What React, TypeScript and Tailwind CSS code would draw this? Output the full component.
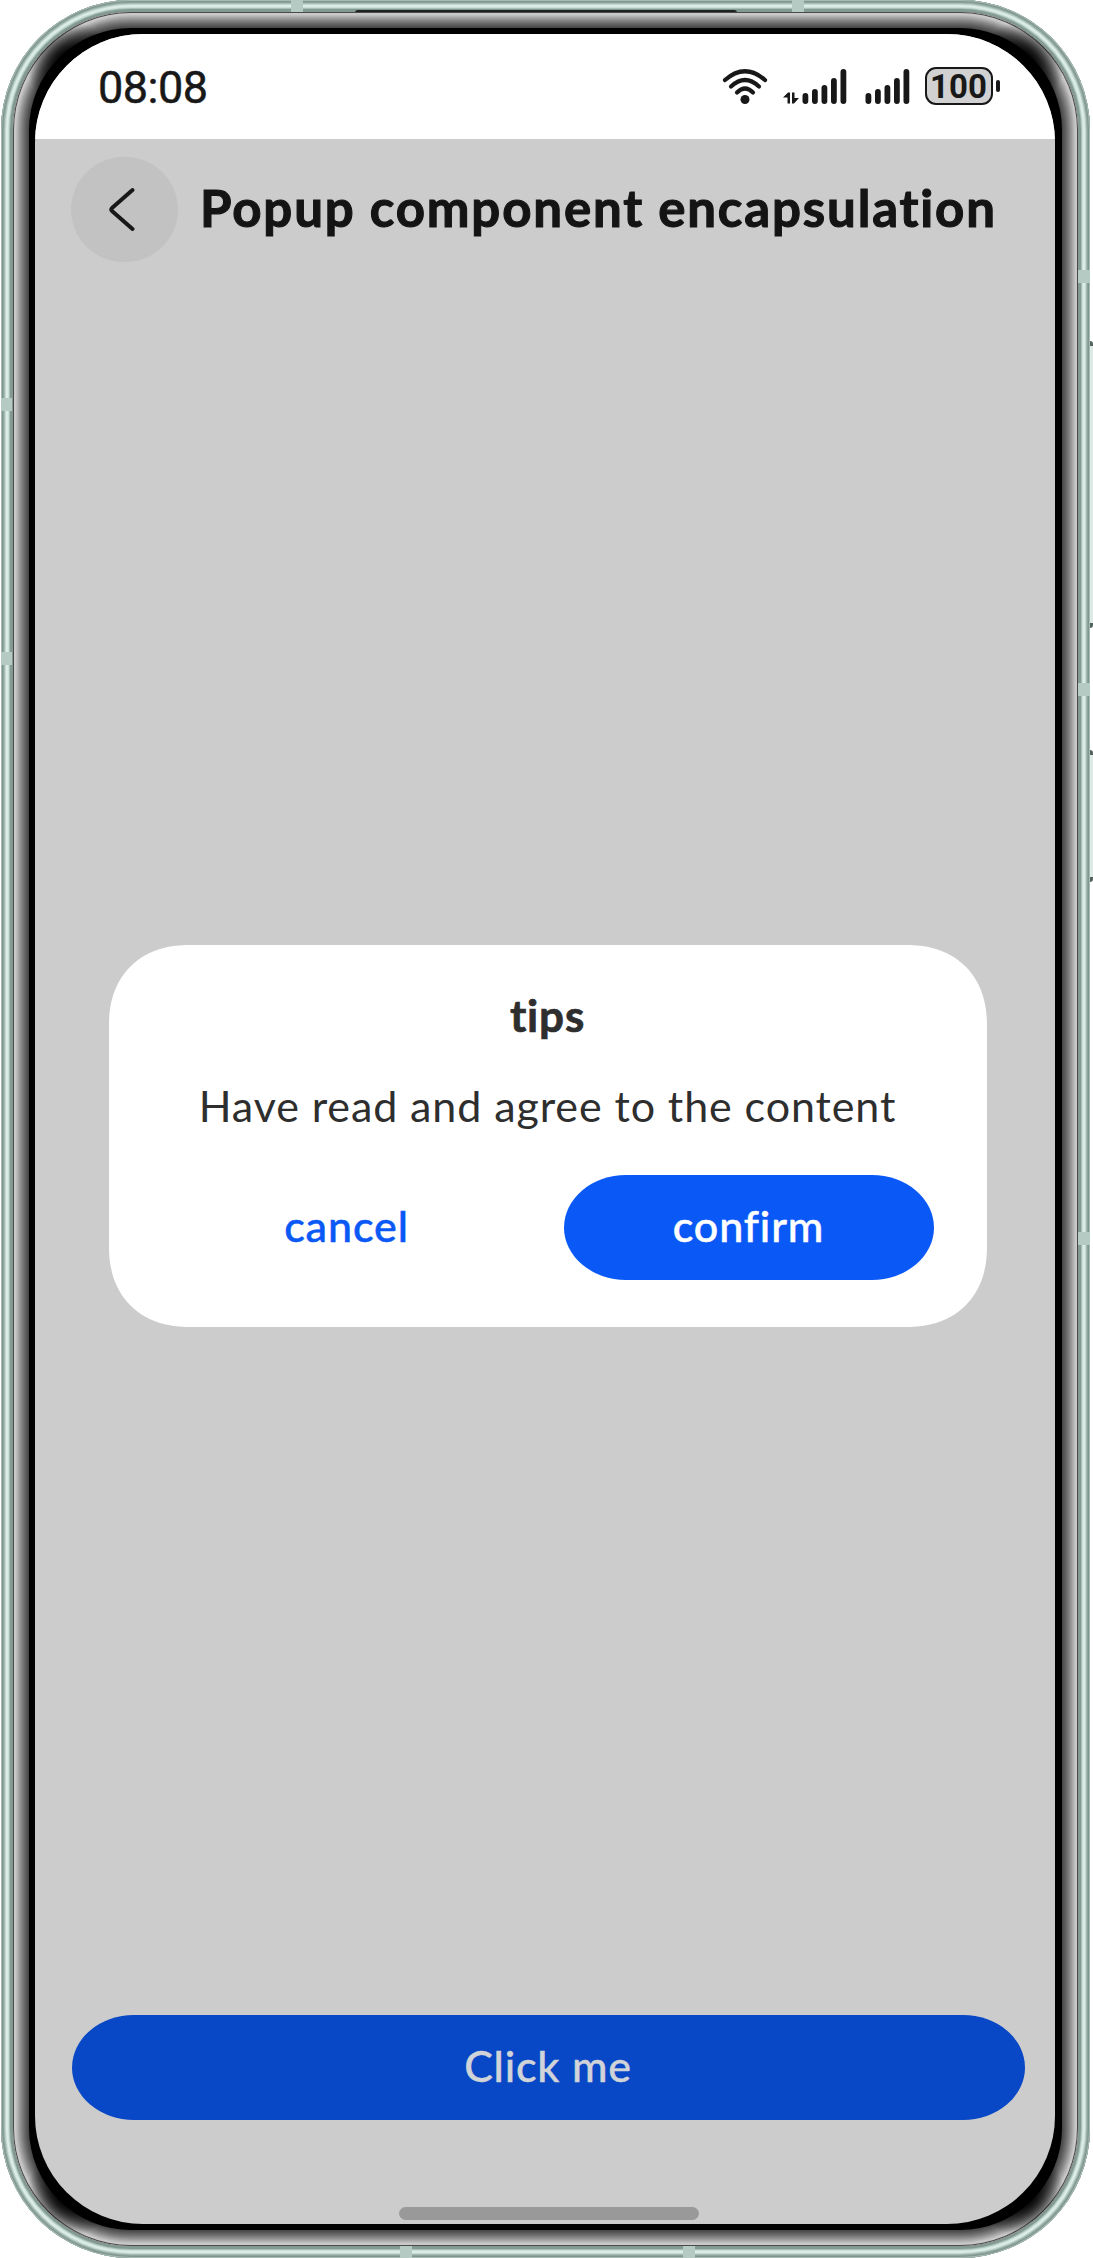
import React from "react";

const INK = "#181818";

function Rail({ className }: { className: string }) {
  return <span className={`absolute bg-[#b4cac3] ${className}`} />;
}

function SignalBars() {
  const tops = [24, 20, 16, 9, 0];
  return (
    <svg className="h-[36px] w-[46px]" viewBox="0 0 46 36">
      {tops.map((t, i) => (
        <rect key={i} x={0.5 + i * 9.5} y={t} width="5.8" height={35 - t} rx="2.9" fill={INK} />
      ))}
    </svg>
  );
}

function StatusBar() {
  return (
    <div className="flex h-[105px] shrink-0 items-start bg-white text-[#181818]">
      <span className="ml-[63px] mt-[27px] font-['Roboto'] text-[45px] leading-[53px] tracking-[-0.5px] [-webkit-text-stroke:0.5px_#181818]">
        08:08
      </span>
      <div className="ml-auto mr-[55px] mt-[33px] flex items-start">
        <svg className="mt-[2px] h-[37px] w-[46px]" viewBox="0 0 46 37">
          <g fill="none" stroke={INK} strokeWidth="4.2" strokeLinecap="round">
            <path d="M3 11 Q23 -6.5 43 11" />
            <path d="M9 17.5 Q23 4.5 37 17.5" />
            <path d="M15 23.5 Q23 15.5 31 23.5" />
          </g>
          <circle cx="23" cy="30.5" r="4.5" fill={INK} />
        </svg>
        <svg className="ml-[15px] mt-[25px] h-[12px] w-[16px]" viewBox="0 0 16 12">
          <path d="M0 5.5 L5 .5 H7 V11.5 H4.5 V5.5 Z M9 .5 H11.5 V6 H16 L11 11.5 H9 Z" fill={INK} />
        </svg>
        <div className="ml-[3px] mt-[2px]"><SignalBars /></div>
        <div className="ml-[17px] mt-[2px]"><SignalBars /></div>
        <div className="ml-[14px] flex items-center">
          <div className="flex h-[38px] w-[68px] items-center justify-center rounded-[11px] border-[2.5px] border-[#181818] bg-[#d1d1d1] font-['Roboto'] text-[33px] font-bold leading-none">
            100
          </div>
          <div className="ml-[3px] h-[12px] w-[4.5px] rounded-[2px] bg-[#181818]" />
        </div>
      </div>
    </div>
  );
}

function Dialog() {
  return (
    <section className="ml-[73.5px] mt-[683px] flex h-[382px] w-[878px] shrink-0 flex-col rounded-[80px] bg-white [corner-shape:superellipse(1.15)]">
      <h2 className="mt-[44px] text-center text-[44px] font-bold leading-[52px] tracking-[0.8px] text-[#2e2e2e] [-webkit-text-stroke:0.7px_#2e2e2e]">
        tips
      </h2>
      <p className="mt-[39px] whitespace-nowrap text-center text-[43px] leading-[52px] tracking-[0.9px] text-[#2e2e2e]">
        Have read and agree to the content
      </p>
      <div className="mx-[53px] mt-[43px] flex justify-between text-[43px] font-medium tracking-[0.9px]">
        <button className="h-[105px] w-[370px] pb-[2px] text-[#0a59f7] [-webkit-text-stroke:0.5px_#0a59f7]">cancel</button>
        <button className="h-[105px] w-[370px] rounded-[62px/52.5px] bg-[#0a59f7] pb-[2px] text-white [-webkit-text-stroke:0.5px_#ffffff]">
          confirm
        </button>
      </div>
    </section>
  );
}

export default function App() {
  return (
    <div className="relative h-[2258px] w-[1093px] overflow-hidden bg-white pl-px font-['Lato','Noto_Sans',sans-serif] [font-variant-ligatures:none]">
      <span className="absolute left-[1088px] top-[341px] h-[287px] w-[5px] rounded-r-[3px] border-y-[5px] border-[#53645f] bg-[#dcebe6]" />
      <span className="absolute left-[1088px] top-[750px] h-[132px] w-[5px] rounded-r-[3px] border-y-[5px] border-[#53645f] bg-[#dcebe6]" />
      <div className="relative h-[2258px] w-[1089px] rounded-[130px] bg-[#849993] p-[12px] shadow-[inset_0_0_0_1px_#a9bbb5,inset_0_0_0_2px_#7f958f,inset_0_0_0_3px_#8da39c,inset_0_0_0_4px_#a6bcb5,inset_0_0_0_5px_#c4d8d2,inset_0_0_0_7px_#dcede7,inset_0_0_0_8px_#cbdfd9,inset_0_0_0_9px_#a9c0b9,inset_0_0_0_11px_#839a93]">
        <Rail className="left-[290px] top-0 h-[12px] w-[12px]" />
        <Rail className="left-[791px] top-0 h-[12px] w-[12px]" />
        <Rail className="left-[399px] bottom-0 h-[12px] w-[12px]" />
        <Rail className="left-[682px] bottom-0 h-[12px] w-[12px]" />
        <Rail className="left-0 top-[398px] h-[13px] w-[11px]" />
        <Rail className="left-0 top-[652px] h-[13px] w-[11px]" />
        <Rail className="right-0 top-[270px] h-[13px] w-[12px]" />
        <Rail className="right-0 top-[683px] h-[13px] w-[12px]" />
        <Rail className="right-0 top-[1232px] h-[13px] w-[12px]" />
        <span className="absolute left-[354px] top-[10px] h-[3px] w-[382px] rounded-t-[3px] bg-[#1d2120]" />
        <div className="relative h-full overflow-hidden rounded-[118px] bg-black pb-[22px] pl-[22px] pr-[23px] pt-[22px] shadow-[inset_0_0_0_1px_#4a4a4a,inset_0_0_0_2px_#c9c9c9,inset_0_0_0_3px_#c8c8c8,inset_0_0_0_4px_#bdbdbd,inset_0_0_0_5px_#b2b2b2,inset_0_0_0_6px_#a6a6a6,inset_0_0_0_7px_#9b9b9b,inset_0_0_0_8px_#909090,inset_0_0_0_9px_#868686,inset_0_0_0_10px_#7c7c7c,inset_0_0_0_11px_#727272,inset_0_0_0_12px_#696969,inset_0_0_0_13px_#606060,inset_0_0_0_14px_#585858,inset_0_0_0_15px_#505050,inset_0_0_0_16px_#484848]">
          <span className="absolute left-0 top-0 size-[120px] bg-[radial-gradient(circle_at_58px_54px,#000_10px,transparent_44px)]" />
          <span className="absolute right-0 top-0 size-[120px] bg-[radial-gradient(circle_at_62px_54px,#000_10px,transparent_44px)]" />
          <span className="absolute bottom-0 left-0 size-[120px] bg-[radial-gradient(circle_at_58px_66px,#000_10px,transparent_44px)]" />
          <span className="absolute bottom-0 right-0 size-[120px] bg-[radial-gradient(circle_at_62px_66px,#000_10px,transparent_44px)]" />
          <main className="relative flex h-full flex-col overflow-hidden rounded-[108px] bg-[#cccccc]">
            <StatusBar />
            <header className="flex h-[123px] shrink-0 items-end pl-[36px]">
              <button className="flex h-[105px] w-[107px] items-center justify-center rounded-full bg-[#c2c2c2]">
                <svg className="mr-[5px] h-[46px] w-[28px]" viewBox="0 0 28 46" fill="none" stroke={INK} strokeWidth="4" strokeLinecap="round" strokeLinejoin="round">
                  <path d="M24.5 3 L4 21 Q2.6 22.5 4 24 L24.5 42" />
                </svg>
              </button>
              <h1 className="mb-[24px] ml-[22px] whitespace-nowrap text-[51px] font-bold leading-[60px] tracking-[1.83px] text-[#141414] [-webkit-text-stroke:1.1px_#141414]">
                Popup component encapsulation
              </h1>
            </header>
            <Dialog />
            <button className="ml-[36.5px] mt-[688px] h-[105px] w-[953px] shrink-0 rounded-[62px/52.5px] bg-[#0847c6] pb-[2px] text-[43px] font-medium tracking-[0.8px] text-[#d0d3d8] [-webkit-text-stroke:0.4px_#d0d3d8]">
              Click me
            </button>
            <div className="ml-[364px] mt-[87px] h-[13px] w-[300px] shrink-0 rounded-full bg-[#999999]" />
          </main>
        </div>
      </div>
    </div>
  );
}
